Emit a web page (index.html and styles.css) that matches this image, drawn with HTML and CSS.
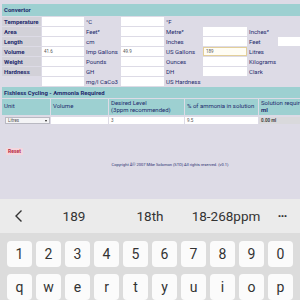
FILE: index.html
```html
<!DOCTYPE html>
<html>
<head>
<meta charset="utf-8">
<link rel="stylesheet" href="styles.css">
</head>
<body>
<div class="screen">
  <div class="page">
    <div class="section-head">Convertor</div>
    <div class="conv">
      <div class="lbl">Temperature</div><div class="inp"></div><div class="unit">°C</div><div class="inp"></div><div class="unit">°F</div><div></div><div></div><div></div>
      <div class="lbl">Area</div><div class="inp"></div><div class="unit">Feet²</div><div class="inp"></div><div class="unit">Metre²</div><div class="inp"></div><div class="unit">Inches²</div><div></div>
      <div class="lbl">Length</div><div class="inp"></div><div class="unit">cm</div><div class="inp"></div><div class="unit">Inches</div><div class="inp"></div><div class="unit">Feet</div><div class="inp"></div>
      <div class="lbl">Volume</div><div class="inp">41.6</div><div class="unit">Imp Gallons</div><div class="inp">49.9</div><div class="unit">US Gallons</div><div class="inp focus">189</div><div class="unit">Litres</div><div></div>
      <div class="lbl">Weight</div><div class="inp"></div><div class="unit">Pounds</div><div class="inp"></div><div class="unit">Ounces</div><div class="inp"></div><div class="unit">Kilograms</div><div></div>
      <div class="lbl">Hardness</div><div class="inp"></div><div class="unit">GH</div><div class="inp"></div><div class="unit">DH</div><div class="inp"></div><div class="unit">Clark</div><div></div>
      <div></div><div class="inp"></div><div class="unit">mg/l CaCo3</div><div class="inp"></div><div class="unit">US Hardness</div><div></div><div></div><div></div>
    </div>
    <div class="section-head fish">Fishless Cycling - Ammonia Required</div>
    <div class="fgrid">
      <div class="th">Unit</div>
      <div class="th">Volume</div>
      <div class="th">Desired Level<br>(3ppm recommended)</div>
      <div class="th">% of ammonia in solution</div>
      <div class="th">Solution required<br><b>ml</b></div>
      <div class="td"><div class="sel">Litres<span class="arrow"></span></div></div>
      <div class="td"><div class="inp"></div></div>
      <div class="td"><div class="inp">3</div></div>
      <div class="td"><div class="inp">9.5</div></div>
      <div class="td"><div class="out">0.00 ml</div></div>
    </div>
    <div class="reset-row"><span class="reset">Reset</span></div>
    <div class="copy">Copyright Â© 2007 Mike Solomon (STO) All rights reserved. (v0.1)</div>
  </div>
  <div class="kbd">
    <div class="sugg">
      <div class="s-back"><svg width="9" height="14" viewBox="0 0 9 14"><path d="M7.5 1.5 L2 7 L7.5 12.5" fill="none" stroke="#333" stroke-width="1.4"/></svg></div>
      <div class="s-item">189</div>
      <div class="s-item">18th</div>
      <div class="s-item">18-268ppm</div>
      <div class="s-more">···</div>
    </div>
    <div class="krow">
      <div class="key">1</div><div class="key">2</div><div class="key">3</div><div class="key">4</div><div class="key">5</div><div class="key">6</div><div class="key">7</div><div class="key">8</div><div class="key">9</div><div class="key">0</div>
    </div>
    <div class="krow">
      <div class="key">q</div><div class="key">w</div><div class="key">e</div><div class="key">r</div><div class="key">t</div><div class="key">y</div><div class="key">u</div><div class="key">i</div><div class="key">o</div><div class="key">p</div>
    </div>
  </div>
</div>
</body>
</html>
```

FILE: styles.css
```css
html, body {
  margin: 0;
  padding: 0;
  overflow: hidden;
  width: 300px;
  height: 300px;
}
body {
  font-family: Roboto, "Noto Sans", sans-serif;
  background: #dddbe6;
}
.screen {
  display: flex;
  flex-direction: column;
  width: 300px;
  height: 300px;
}
.page {
  height: 199px;
  flex: none;
  width: 338px;
  padding: 4px 0 0 2px;
  box-sizing: border-box;
  color: #1d2a6c;
  font-size: 6px;
  overflow: hidden;
}
.section-head {
  background: #9dd0d1;
  font-weight: bold;
  height: 12px;
  line-height: 12px;
  padding-left: 2px;
  margin-bottom: 1px;
}
.conv {
  display: grid;
  grid-template-columns: 39px 42px 35px 43px 37px 44px 29px 44px;
  grid-auto-rows: 9px;
  gap: 1px;
}
.lbl {
  background: #d2d1d8;
  font-weight: bold;
  line-height: 9px;
  padding-left: 2px;
  white-space: nowrap;
}
.unit {
  line-height: 9px;
  padding-left: 1px;
  white-space: nowrap;
}
.inp {
  background: #ffffff;
  font-size: 4.5px;
  line-height: 9px;
  padding-left: 2px;
  color: #555;
  box-sizing: border-box;
}
.inp.focus {
  background: #fffdf4;
  border: 1px solid #e3cf9a;
  line-height: 7px;
}
.fish {
  margin-top: 1px;
  height: 11px;
  line-height: 11px;
  margin-bottom: 1px;
}
.fgrid {
  display: grid;
  grid-template-columns: 48px 57px 75px 73px 75px;
  grid-template-rows: 16px 9px;
  gap: 1px;
}
.th {
  background: #9dd0d1;
  line-height: 6.5px;
  padding: 1px 0 0 2px;
  white-space: nowrap;
}
.th:first-child, .th:nth-child(2), .th:nth-child(4) {
  line-height: 14px;
  padding-top: 0;
}
.td {
  display: flex;
  padding-top: 1px;
}
.td .inp {
  flex: 1;
  height: 7px;
  line-height: 7px;
}
.sel {
  margin-left: 3px;
  flex: 1;
  height: 7px;
  line-height: 7px;
  font-size: 4.5px;
  background: #f4f4f6;
  border: 0.5px solid #b9b9c2;
  box-sizing: border-box;
  padding-left: 2px;
  color: #555;
  display: flex;
  align-items: center;
  justify-content: space-between;
}
.arrow {
  width: 0;
  height: 0;
  border-left: 1.2px solid transparent;
  border-right: 1.2px solid transparent;
  border-top: 2px solid #222;
  margin-right: 2px;
}
.out {
  flex: 1;
  height: 7px;
  line-height: 7px;
  background: #d9d9dc;
  font-size: 4.5px;
  font-weight: bold;
  color: #444;
  padding-left: 2px;
}
.reset-row {
  padding: 22px 0 0 4px;
  height: 7px;
}
.reset {
  display: inline-block;
  background: #f4d6dd;
  color: #b8283f;
  font-weight: bold;
  font-size: 5px;
  line-height: 7px;
  padding: 0 2px;
  border-radius: 1px;
}
.copy {
  margin-top: 8px;
  text-align: center;
  font-size: 4px;
  color: #2a2f70;
  white-space: nowrap;
}
.kbd {
  flex: 1;
  background: #dcdcdc;
}
.sugg {
  height: 34px;
  background: #ebebeb;
  display: flex;
  align-items: center;
  color: #333;
  font-size: 13.5px;
}
.s-back {
  width: 36px;
  display: flex;
  justify-content: center;
}
.s-item {
  width: 76px;
  text-align: center;
}
.s-more {
  width: 36px;
  text-align: center;
  font-weight: bold;
  letter-spacing: -1px;
}
.krow {
  display: flex;
  gap: 4px;
  padding: 0 7px;
  margin-top: 8px;
}
.krow + .krow {
  margin-top: 7px;
}
.key {
  width: 25px;
  height: 26px;
  background: #fbfbfb;
  border-radius: 4px;
  display: flex;
  align-items: center;
  justify-content: center;
  font-size: 14px;
  color: #333;
}
```
